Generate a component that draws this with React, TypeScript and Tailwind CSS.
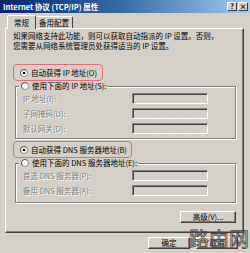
import React from 'react';

const font = "font-['Noto_Sans_CJK_SC','Liberation_Sans',sans-serif]";

const Radio: React.FC<{ checked?: boolean }> = ({ checked }) => (
    <svg width="8" height="8" viewBox="0 0 12 12" className="shrink-0">
        <circle cx="6" cy="6" r="5.3" fill="#fff" stroke="#808080" strokeWidth="1.3" />
        <path d="M2.2 9.6 A5 5 0 0 1 9.6 2.2" fill="none" stroke="#404040" strokeWidth="1" />
        {checked && <circle cx="6" cy="6" r="2" fill="#000" />}
    </svg>
);

const RadioRow: React.FC<{ checked?: boolean; label: string }> = ({ checked, label }) => (
    <div className="flex h-[10px] items-center gap-[3px] whitespace-nowrap">
        <Radio checked={checked} />
        <span className="text-[7.5px] leading-[10px] text-black">{label}</span>
    </div>
);

const IpInput: React.FC = () => (
    <div className="flex h-[11px] w-[76px] items-center justify-around border border-[#808080] border-b-white border-r-white bg-[#d4d0c8] px-[12px] shadow-[inset_1px_1px_0_#404040]">
        <span className="text-[6px] leading-none text-[#b0aca4]">.</span>
        <span className="text-[6px] leading-none text-[#b0aca4]">.</span>
        <span className="text-[6px] leading-none text-[#b0aca4]">.</span>
    </div>
);

const FieldRow: React.FC<{ label: string }> = ({ label }) => (
    <div className="flex h-[11px] items-center">
        <span className="w-[109px] whitespace-nowrap text-[7.5px] leading-none text-[#808080] [text-shadow:1px_1px_0_#fff]">{label}</span>
        <IpInput />
    </div>
);

const GroupBox: React.FC<{ legend: string; height: string; rows: string[] }> = ({ legend, height, rows }) => (
    <div className="ml-[9px] w-[221px]">
        <div className="relative z-10 ml-[4px] w-fit bg-[#d4d0c8] pl-[2px] pr-[1px]">
            <RadioRow label={legend} />
        </div>
        <div className={`-mt-[5px] ${height} flex flex-col gap-[4px] border border-[#808080] pl-[7px] pt-[6px] shadow-[inset_1px_1px_0_#fff,1px_1px_0_#fff]`}>
            {rows.map((r) => (
                <FieldRow key={r} label={r} />
            ))}
        </div>
    </div>
);

const Button: React.FC<{ label: string; width: string }> = ({ label, width }) => (
    <div className={`${width} flex h-[12px] items-center justify-center border border-white border-b-[#404040] border-r-[#404040] bg-[#d4d0c8] shadow-[inset_-1px_-1px_0_#808080] text-[7.5px] leading-none text-black`}>
        {label}
    </div>
);

const TitleButton: React.FC<{ children: React.ReactNode }> = ({ children }) => (
    <div className="flex h-[9px] w-[10px] items-center justify-center border border-white border-b-[#404040] border-r-[#404040] bg-[#d4d0c8] text-[7px] font-bold leading-none text-black">
        {children}
    </div>
);

export default function App() {
    return (
        <div className={`relative flex h-[253px] w-[250px] flex-col overflow-hidden bg-[#d4d0c8] ${font}`}>
            {/* title bar */}
            <div className="flex h-[13px] items-center justify-between bg-gradient-to-r from-[#0a246a] via-[#3a6ea5] to-[#a6caf0] pl-[3px] pr-[2px]">
                <span className="whitespace-nowrap text-[7.5px] font-bold leading-none text-white">Internet 协议 (TCP/IP) 属性</span>
                <div className="flex gap-[1px]">
                    <TitleButton>?</TitleButton>
                    <TitleButton>×</TitleButton>
                </div>
            </div>

            {/* tabs */}
            <div className="flex h-[15px] items-end pl-[7px]">
                <div className="relative z-10 -mb-[1px] flex h-[14px] w-[29px] items-center justify-center rounded-t-[2px] border border-b-0 border-white border-r-[#404040] bg-[#d4d0c8] text-[7.5px] leading-none text-black">
                    常规
                </div>
                <div className="flex h-[12px] w-[37px] items-center justify-center rounded-t-[2px] border border-b-0 border-l-0 border-white border-r-[#404040] text-[7.5px] leading-none text-black">
                    备用配置
                </div>
            </div>

            {/* panel */}
            <div className="ml-[5px] flex h-[205px] w-[239px] flex-col border border-white border-b-[#404040] border-r-[#404040] shadow-[inset_-1px_-1px_0_#808080]">
                <p className="pl-[7px] pt-[2px] text-[7.5px] leading-[10px] text-black">
                    如果网络支持此功能，则可以获取自动指派的 IP 设置。否则，
                    <br />
                    您需要从网络系统管理员处获得适当的 IP 设置。
                </p>

                <div className="ml-[7px] mt-[13px] flex h-[17px] w-[90px] items-center rounded-[4px] border-[1.5px] border-[#df6f7b] pl-[6px]">
                    <RadioRow checked label="自动获得 IP 地址(O)" />
                </div>

                <GroupBox legend="使用下面的 IP 地址(S):" height="h-[53px]" rows={['IP 地址(I):', '子网掩码(U):', '默认网关(D):']} />

                <div className="ml-[7px] mt-[2px] flex h-[17px] w-[119px] items-center rounded-[4px] border-[1.5px] border-[#df6f7b] pl-[6px]">
                    <RadioRow checked label="自动获得 DNS 服务器地址(B)" />
                </div>

                <GroupBox legend="使用下面的 DNS 服务器地址(E):" height="h-[40px]" rows={['首选 DNS 服务器(P):', '备用 DNS 服务器(A):']} />

                <div className="ml-[174px] mt-[8px]">
                    <Button label="高级(V)..." width="w-[56px]" />
                </div>
            </div>

            {/* footer buttons */}
            <div className="mt-[4px] flex gap-[6px] pl-[148px]">
                <Button label="确定" width="w-[42px]" />
                <Button label="取消" width="w-[42px]" />
            </div>

            {/* watermark */}
            <div className="pointer-events-none absolute left-[189px] top-[229px] whitespace-nowrap text-[20px] leading-none text-transparent [-webkit-text-stroke:0.8px_#4a4a4a]">
                路由网
            </div>
        </div>
    );
}
